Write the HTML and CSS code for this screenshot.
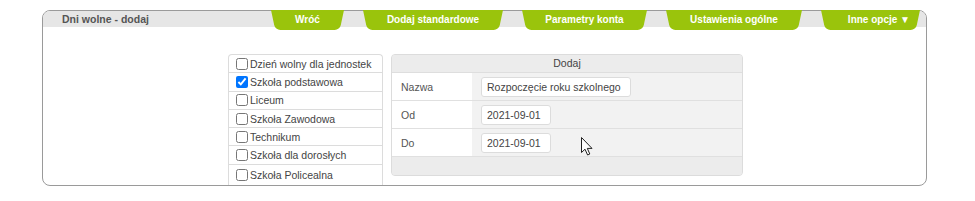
FILE: index.html
```html
<!DOCTYPE html>
<html lang="pl">
<head>
<meta charset="utf-8">
<title>Dni wolne - dodaj</title>
<link rel="stylesheet" href="styles.css">
</head>
<body>
<div class="window">
  <div class="head">
    <div class="title">Dni wolne - dodaj</div>
    <nav class="tabs">
      <a class="tab tab-back">Wróć</a>
      <a class="tab tab-std">Dodaj standardowe</a>
      <a class="tab tab-params">Parametry konta</a>
      <a class="tab tab-settings">Ustawienia ogólne</a>
      <a class="tab tab-more">Inne opcje ▼</a>
    </nav>
  </div>
  <div class="content">
    <ul class="types">
      <li><label><input type="checkbox">Dzień wolny dla jednostek</label></li>
      <li><label><input type="checkbox" checked>Szkoła podstawowa</label></li>
      <li><label><input type="checkbox">Liceum</label></li>
      <li><label><input type="checkbox">Szkoła Zawodowa</label></li>
      <li><label><input type="checkbox">Technikum</label></li>
      <li><label><input type="checkbox">Szkoła dla dorosłych</label></li>
      <li><label><input type="checkbox">Szkoła Policealna</label></li>
    </ul>
    <div class="panel">
      <div class="panel-head">Dodaj</div>
      <div class="row">
        <div class="label">Nazwa</div>
        <div class="value"><input class="field field-name" type="text" value="Rozpoczęcie roku szkolnego"></div>
      </div>
      <div class="row">
        <div class="label">Od</div>
        <div class="value"><input class="field field-date" type="text" value="2021-09-01"></div>
      </div>
      <div class="row">
        <div class="label">Do</div>
        <div class="value"><input class="field field-date" type="text" value="2021-09-01"></div>
      </div>
      <div class="panel-foot"></div>
    </div>
  </div>
  <svg class="cursor" width="13" height="19" viewBox="0 0 13 19">
    <path d="M0.5 0.5 L0.5 15.5 L4 12.2 L6.6 18 L8.8 17 L6.3 11.4 L11 11.4 Z" fill="#fff" stroke="#222" stroke-width="1" stroke-linejoin="round"/>
  </svg>
</div>
</body>
</html>
```

FILE: styles.css
```css
* { box-sizing: border-box; }

html, body {
  margin: 0;
  padding: 0;
  background: #fff;
}

body {
  font-family: "Liberation Sans", Arial, sans-serif;
  font-size: 10.5px;
  color: #444;
}

.window {
  position: relative;
  margin: 10px 0 0 42px;
  width: 885px;
  height: 176px;
  border: 1px solid #9a9a9a;
  border-radius: 8px;
  background: #fff;
}

.head {
  display: flex;
  align-items: flex-start;
  height: 16px;
  background: #e6e6e6;
  border-radius: 7px 7px 0 0;
}

.title {
  padding-left: 19px;
  line-height: 16px;
  font-weight: bold;
  font-size: 10.5px;
  color: #555;
}

.tabs {
  display: flex;
  gap: 19px;
  margin-left: auto;
  margin-right: 6px;
  margin-top: -1px;
}

.tab {
  position: relative;
  display: block;
  height: 20px;
  line-height: 19px;
  text-align: center;
  color: #fff;
  font-weight: bold;
  font-size: 10px;
  cursor: pointer;
}

.tab::before,
.tab::after {
  content: "";
  position: absolute;
  top: 0;
  bottom: 0;
  width: 60%;
  background: #9ac40c;
  transform-origin: top;
  z-index: -1;
}

.tab::before {
  left: 0;
  transform: skewX(12deg);
  border-bottom-left-radius: 5px;
}

.tab::after {
  right: 0;
  transform: skewX(-12deg);
  border-bottom-right-radius: 5px;
}

.tab { z-index: 0; isolation: isolate; }

.tab-back { width: 73px; }
.tab-std { width: 140px; }
.tab-params { width: 125px; }
.tab-settings { width: 136px; }
.tab-more { width: 99px; text-align: right; padding-right: 10px; }

.content {
  display: flex;
  align-items: flex-start;
  padding: 27px 0 0 185px;
}

.types {
  list-style: none;
  margin: 0;
  padding: 0;
  width: 155px;
  border: 1px solid #dcdcdc;
  border-bottom: 0;
  border-radius: 4px 4px 0 0;
  background: #fff;
}

.types li {
  height: 18.3px;
  border-bottom: 1px solid #dcdcdc;
}

.types li:last-child { border-bottom: 0; height: 20px; }

.types label {
  display: flex;
  align-items: center;
  height: 100%;
  white-space: nowrap;
  color: #444;
}

.types input {
  width: 12px;
  height: 12px;
  margin: 0 2px 0 7px;
}

.panel {
  margin-left: 8px;
  width: 352px;
  border: 1px solid #dcdcdc;
  border-radius: 4px;
  overflow: hidden;
  background: #f2f2f2;
}

.panel-head {
  height: 18px;
  line-height: 17px;
  text-align: center;
  background: #ececec;
  border-bottom: 1px solid #dedede;
  color: #444;
}

.row {
  display: grid;
  grid-template-columns: 80px 1fr;
  height: 28px;
  border-bottom: 1px solid #e0e0e0;
}

.label {
  display: flex;
  align-items: center;
  padding-left: 9px;
  background: #fff;
  color: #555;
}

.value {
  display: flex;
  align-items: center;
  padding-left: 9px;
  background: #f2f2f2;
}

.field {
  height: 20px;
  border: 1px solid #dcdcdc;
  border-radius: 3px;
  background: #fff;
  padding: 0 5px;
  font-family: "Liberation Sans", Arial, sans-serif;
  font-size: 10.5px;
  color: #444;
  outline: none;
}

.field-name { width: 150px; }
.field-date { width: 70px; }

.panel-foot {
  height: 18px;
  background: #ececec;
}

.cursor {
  position: absolute;
  left: 538px;
  top: 126px;
}
```
